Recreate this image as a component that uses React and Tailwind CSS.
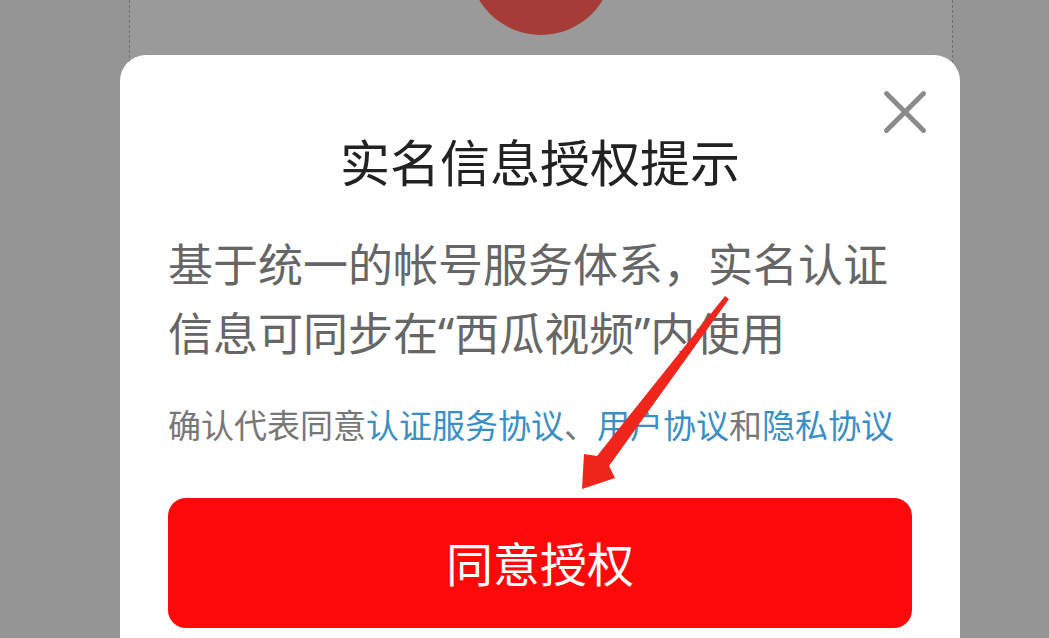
import { X } from "lucide-react";

const font = { fontFamily: '"Noto Sans CJK SC", "Noto Sans", sans-serif' };
// Latin font first so the curly quotes come out narrow, CJK glyphs fall back
const bodyFont = { fontFamily: '"Noto Sans", "Noto Sans CJK SC", sans-serif' };

function Arrow() {
    // annotation arrow pointing at the button
    return (
        <svg
            className="absolute left-0 top-0 pointer-events-none"
            width="1049"
            height="638"
            viewBox="0 0 1049 638"
        >
            <polygon
                points="729,299 609,466 615,478 582,489 584,454 597,456 725,296"
                fill="#f0251c"
            />
        </svg>
    );
}

export default function App() {
    return (
        <div className="relative w-full h-[638px] overflow-hidden bg-[#959595]" style={font}>
            {/* page behind the dialog */}
            <div className="ml-[129px] mr-[96px] h-full border-x border-dashed border-[#6f6f6f] bg-[#9a9a9a] flex justify-center">
                <div className="w-[144px] h-[144px] rounded-full bg-[#a63c37] -mt-[109px]" />
            </div>

            {/* dialog */}
            <div className="absolute left-[120px] top-[55px] w-[840px] h-[640px] bg-white rounded-[26px] px-[48px] flex flex-col">
                <button className="absolute right-[18px] top-[20px] text-[#8a8a8a]">
                    <X size={74} strokeWidth={1.6} />
                </button>

                <h2 className="mt-[75px] text-center text-[50px] leading-[60px] text-[#222] font-normal">
                    实名信息授权提示
                </h2>

                <p className="mt-[40px] text-[45px] leading-[69px] text-[#666]" style={bodyFont}>
                    基于统一的帐号服务体系，实名认证信息可同步在“西瓜视频”内使用
                </p>

                <p className="mt-[34px] text-[33px] leading-[44px] text-[#777] whitespace-nowrap">
                    确认代表同意<span className="text-[#3a8fc6]">认证服务协议</span>、<span className="text-[#3a8fc6]">用户协议</span>和<span className="text-[#3a8fc6]">隐私协议</span>
                </p>

                <button className="mt-[52px] h-[130px] w-full rounded-[18px] bg-[#fc0a0a] text-white text-[47px] leading-none pb-[4px]">
                    同意授权
                </button>
            </div>

            <Arrow />
        </div>
    );
}
